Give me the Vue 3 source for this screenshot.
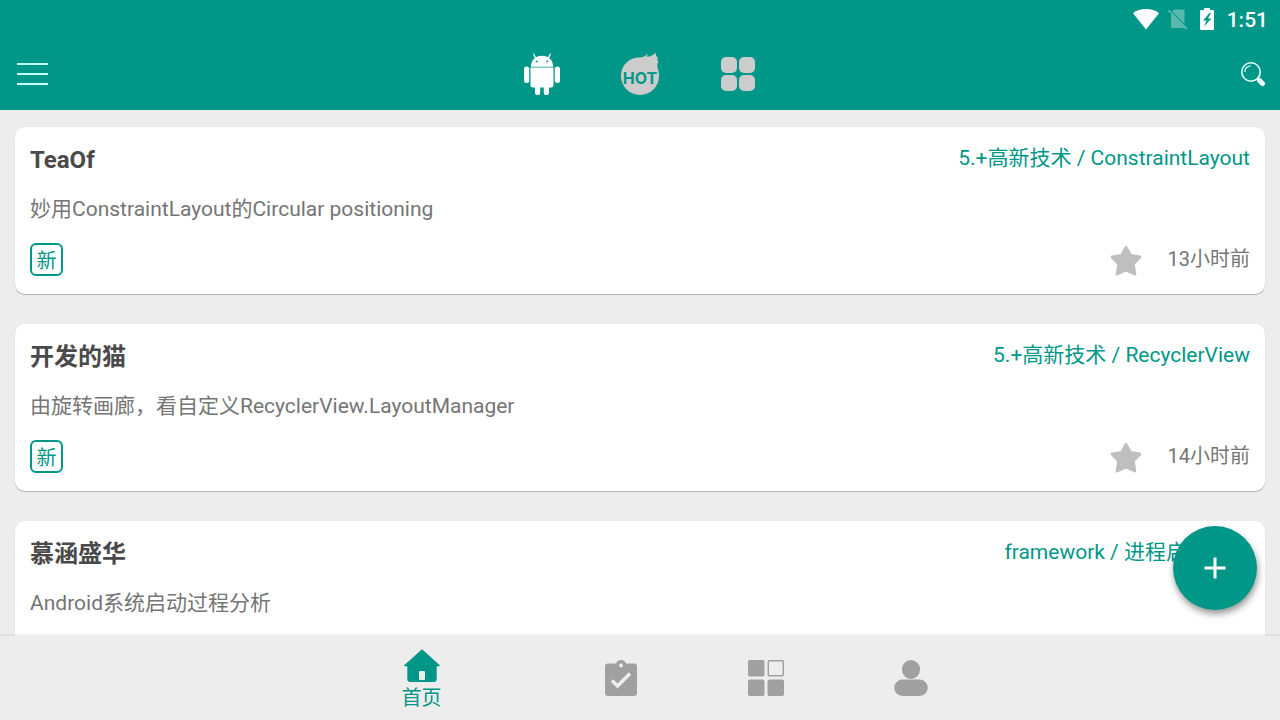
<script setup>
const articles = [
  { author: 'TeaOf', tag: '5.+高新技术 / ConstraintLayout', title: '妙用ConstraintLayout的Circular positioning', time: '13小时前' },
  { author: '开发的猫', tag: '5.+高新技术 / RecyclerView', title: '由旋转画廊，看自定义RecyclerView.LayoutManager', time: '14小时前' },
  { author: '慕涵盛华', tag: 'framework / 进程启动流程', title: 'Android系统启动过程分析' },
]
</script>

<template>
  <div class="app">
    <header class="header">
      <div class="status">
        <svg class="wifi" width="28" height="22" viewBox="0 0 28 22" aria-hidden="true">
          <path d="M14 20.500 1 4.200Q6.500 0 14 0t13 4.200z" fill="#fff" />
        </svg>
        <svg class="sim" width="20" height="22" viewBox="0 0 20 22" aria-hidden="true">
          <path d="M6 .5h10.500V19H3V4z" fill="#58b9ae" />
          <path d="M1.500 .8 20 19.500" stroke="#009788" stroke-width="1.500" />
          <path d="M.6 1.500 18.800 20" stroke="#58b9ae" stroke-width="1.800" />
          <path d="M0 4.500 3 7V3.500z" fill="#009788" />
        </svg>
        <svg class="battery" width="16" height="24" viewBox="0 0 16 24" aria-hidden="true">
          <path d="M5 0h6v2h3q1 0 1 1v18q0 1-1 1H2q-1 0-1-1V3q0-1 1-1h3z" fill="#fff" />
          <path d="M10.500 5 4 12.500h3.600L5 18.500l7.500-8H9L12 5z" fill="#009788" />
        </svg>
        <span class="clock">1:51</span>
      </div>
      <div class="toolbar">
        <button class="icon-btn" aria-label="菜单">
          <svg width="34" height="26" viewBox="0 0 34 26">
            <path d="M3 3h31M3 13h31M3 23h31" stroke="#c4fff8" stroke-width="2" />
          </svg>
        </button>
        <nav class="tabs">
          <button class="tab" aria-label="Android">
            <svg width="38" height="44" viewBox="0 0 38 44" fill="#fff">
              <path d="M12.500 6 10.700 2M25.500 6l1.800-4" stroke="#fff" stroke-width="1.200" stroke-linecap="round" />
              <path d="M7.800 14.700C8 8 12.500 3.700 19 3.700s11 4.300 11.200 11z" />
              <circle cx="13.800" cy="9.500" r="1" fill="#009788" />
              <circle cx="24.200" cy="9.500" r="1" fill="#009788" />
              <path d="M7.500 15.500h23v17.200q0 2.800-2.800 2.800H10.300q-2.800 0-2.800-2.800z" />
              <rect x="1" y="14.500" width="5.200" height="16.500" rx="2.500" />
              <rect x="31.800" y="14.500" width="5.200" height="16.500" rx="2.500" />
              <path d="M12 34.500h5.200v6a2.600 2.600 0 0 1-5.200 0zM20.800 34.500H26v6a2.600 2.600 0 0 1-5.200 0z" />
            </svg>
          </button>
          <button class="tab" aria-label="HOT">
            <svg width="40" height="44" viewBox="0 0 40 44">
              <path d="M20 43A19 19 0 0 1 1 24C1 12.500 10 5.500 19 5.500c3 0 5.500-.5 8.500-3.700L27 4.800c3.500-.3 6.500-1.500 8.800-4.300-.2 2 .3 3.500 2 5.200l-.5 3 1.200.5c-1 2.500-1.500 4.500-.8 7.300 1 2.500 1.300 5 1.300 7.500a19 19 0 0 1-19 19z" fill="#ccc" />
              <text x="20" y="31.500" text-anchor="middle" class="hot">HOT</text>
            </svg>
          </button>
          <button class="tab" aria-label="分类">
            <svg width="36" height="36" viewBox="0 0 36 36" fill="#ccc">
              <rect x="1" y="1" width="16" height="16" rx="5" />
              <rect x="19" y="1" width="16" height="16" rx="5" />
              <rect x="1" y="19" width="16" height="16" rx="5" />
              <rect x="19" y="19" width="16" height="16" rx="5" />
            </svg>
          </button>
        </nav>
        <button class="icon-btn" aria-label="搜索">
          <svg width="26" height="26" viewBox="0 0 26 26" fill="none" stroke="#e8fffc">
            <circle cx="11" cy="11" r="9.200" stroke-width="1.600" />
            <path d="M4.800 11A6.300 6.300 0 0 1 10.500 4.800" stroke-width="1.300" />
            <path d="m17.500 17.500 2 2" stroke-width="2" />
            <path d="m19.500 19.500 3 3" stroke-width="5" stroke-linecap="round" />
          </svg>
        </button>
      </div>
    </header>

    <main class="list">
      <article v-for="item in articles" :key="item.author" class="card">
        <div class="row">
          <h2 class="author">{{ item.author }}</h2>
          <a class="tag" href="#">{{ item.tag }}</a>
        </div>
        <p class="title">{{ item.title }}</p>
        <div v-if="item.time" class="row">
          <span class="badge">新</span>
          <div class="meta">
            <button class="star" aria-label="收藏">
              <svg width="34" height="34" viewBox="0 0 34 34">
                <path d="m17 4.500 4.500 8 9.300 1.600-6.600 6.900 1.600 10-8.800-4.200L8.200 31l1.600-10-6.600-6.900 9.300-1.600z" fill="#bfbfbf" stroke="#bfbfbf" stroke-width="3" stroke-linejoin="round" />
              </svg>
            </button>
            <time class="time">{{ item.time }}</time>
          </div>
        </div>
      </article>
    </main>

    <nav class="bottom">
      <button class="fab" aria-label="添加">
        <svg width="24" height="24" viewBox="0 0 24 24"><path d="M12 1.500v21M1.500 12h21" stroke="#fff" stroke-width="3" /></svg>
      </button>
      <button class="item active">
        <svg width="38" height="36" viewBox="0 0 38 36">
          <path d="M19 1.200 36.800 17.300q.5 1-.8 1h-2.300V31q0 3-3 3H7.300q-3 0-3-3V18.300H2q-1.300 0-.8-1z" fill="#009788" />
          <rect x="16" y="23" width="6" height="9" rx="1" fill="#ededed" />
        </svg>
        <span>首页</span>
      </button>
      <button class="item" aria-label="任务">
        <svg width="34" height="38" viewBox="0 0 34 38">
          <path d="M12 4.500C13 2 14.500 1 17 1s4 1 5 3.500h8q3 0 3 3V34q0 3-3 3H4q-3 0-3-3V7.500q0-3 3-3z" fill="#a0a0a0" />
          <circle cx="17" cy="6.500" r="2" fill="#ededed" />
          <path d="m8 21.500 5.500 5.500L26 14.500" fill="none" stroke="#ededed" stroke-width="3.600" />
        </svg>
      </button>
      <button class="item" aria-label="应用">
        <svg width="38" height="38" viewBox="0 0 38 38" fill="#a0a0a0">
          <rect x="1" y="1" width="16.500" height="16.500" rx="2" />
          <rect x="21.300" y="1.800" width="15" height="15" rx="1" fill="none" stroke="#a0a0a0" stroke-width="1.500" />
          <rect x="1" y="20.500" width="16.500" height="16.500" rx="2" />
          <rect x="20.500" y="20.500" width="16.500" height="16.500" rx="2" />
        </svg>
      </button>
      <button class="item" aria-label="我的">
        <svg width="36" height="38" viewBox="0 0 36 38" fill="#a0a0a0">
          <rect x="9" y="1" width="18" height="19" rx="9" />
          <path d="M9.500 20.500h17a8.200 8.200 0 0 1 0 16.500h-17a8.200 8.200 0 0 1 0-16.500z" />
        </svg>
      </button>
    </nav>
  </div>
</template>

<style>
body {
  margin: 0;
  overflow: hidden;
}
</style>

<style scoped>
.app {
  display: flex;
  flex-direction: column;
  height: 100vh;
  background: #ededed;
  font-family: Roboto, "Noto Sans CJK SC", sans-serif;
}
button {
  display: flex;
  align-items: center;
  justify-content: center;
  padding: 0;
  border: 0;
  background: none;
  font: inherit;
  cursor: pointer;
}
svg {
  display: block;
}
.header {
  flex: none;
  background: #009788;
}
.status {
  display: flex;
  align-items: center;
  justify-content: flex-end;
  height: 36px;
  padding: 2px 12px 0 0;
}
.sim {
  margin-left: 8px;
}
.battery {
  margin: 0 12px 0 11px;
}
.clock {
  color: #fff;
  font-size: 21px;
  font-weight: 500;
  line-height: 36px;
}
.toolbar {
  display: grid;
  grid-template-columns: 1fr auto 1fr;
  align-items: center;
  height: 72px;
  padding: 0 14px;
}
.toolbar > :last-child {
  justify-self: end;
}
.toolbar > :first-child {
  justify-self: start;
}
.tabs {
  display: flex;
}
.tab {
  width: 98px;
  height: 72px;
}
.hot {
  fill: #009788;
  font-family: Inter, sans-serif;
  font-size: 16px;
  font-weight: 700;
}
.list {
  flex: 1;
  min-height: 0;
  overflow: hidden;
  display: flex;
  flex-direction: column;
  gap: 30px;
  padding: 17px 15px 0;
}
.card {
  flex: none;
  box-sizing: border-box;
  min-height: 167px;
  padding: 15px 15px 18px;
  border-radius: 10px;
  background: #fff;
  box-shadow: 0 1px 1px rgba(0, 0, 0, 0.25);
}
.row {
  display: flex;
  justify-content: space-between;
  align-items: flex-start;
}
.author {
  margin: 0;
  color: #4a4a4a;
  font-size: 24px;
  font-weight: 700;
  line-height: 36px;
}
.tag {
  color: #009788;
  font-size: 21px;
  line-height: 32px;
  text-decoration: none;
}
.title {
  margin: 14px 0 17px;
  color: #757575;
  font-size: 21px;
  line-height: 34px;
}
.badge {
  box-sizing: border-box;
  width: 33px;
  height: 33px;
  border: 2px solid #009788;
  border-radius: 6px;
  color: #009788;
  font-size: 20px;
  line-height: 32px;
  text-align: center;
}
.meta {
  display: flex;
  align-items: flex-start;
  gap: 25px;
}
.star {
  height: 33px;
}
.time {
  color: #757575;
  font-size: 20px;
  line-height: 32px;
}
.bottom {
  position: relative;
  flex: none;
  display: flex;
  justify-content: center;
  height: 84px;
  background: #ededed;
  box-shadow: 0 -1px 3px rgba(0, 0, 0, 0.1);
}
.item {
  flex-direction: column;
  width: 145px;
}
.active {
  width: 252px;
  padding: 4px 2px 0 0;
  color: #009788;
  font-size: 20px;
  line-height: 28px;
}
.fab {
  position: absolute;
  right: 23px;
  bottom: 110px;
  width: 84px;
  height: 84px;
  border-radius: 50%;
  background: #009788;
  box-shadow: 1px 4px 7px rgba(0, 0, 0, 0.42);
}
</style>
